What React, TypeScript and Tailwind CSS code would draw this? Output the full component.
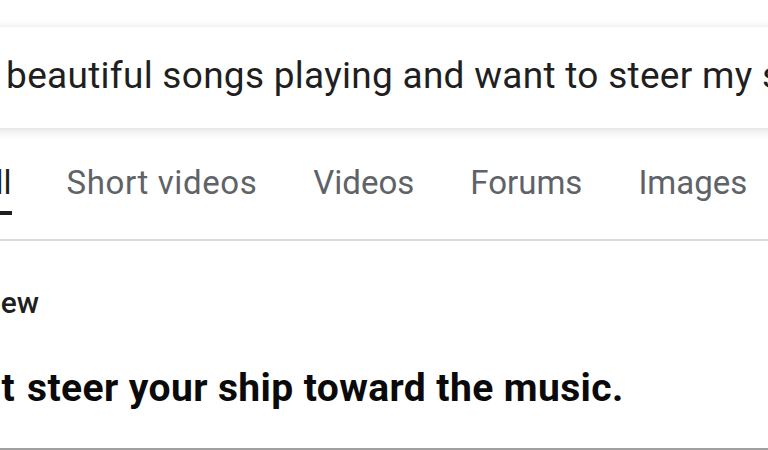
import React from "react";

export default function App() {
  const tabs = ["Short videos", "Videos", "Forums", "Images", "News"];
  return (
    <div
      className="w-[768px] h-[450px] overflow-hidden bg-white relative"
      style={{ fontFamily: "Roboto, 'Liberation Sans', Arial, sans-serif" }}
    >
      <div className="h-[27px]" />
      <div className="ml-[-40px] w-[900px] h-[101px] bg-white shadow-[0_2px_10px_rgba(0,0,0,0.14)] flex items-start pt-[30px]">
        <span className="ml-[-42px] text-[37px] tracking-[0.28px] text-[#1f1f1f] whitespace-nowrap leading-none">
          have beautiful songs playing and want to steer my ship
        </span>
      </div>
      <div className="h-[111px] flex items-start whitespace-nowrap">
        <div className="ml-[-26px] flex flex-col items-stretch mt-[38px]">
          <span className="text-[33px] leading-none text-[#1f1f1f] h-[38px]">All</span>
          <div className="h-[4px] bg-[#1f1f1f] mt-[7px]" />
        </div>
        <div className="flex gap-[56px] ml-[55px] mt-[38px]">
          {tabs.map((t, i) => (
            <span
              key={t}
              className={
                i === 0
                  ? "text-[33px] leading-none text-[#5f6368] h-[38px] tracking-[0.6px]"
                  : "text-[33px] leading-none text-[#5f6368] h-[38px]"
              }
            >
              {t}
            </span>
          ))}
        </div>
      </div>
      <div className="h-[2px] bg-[#dadce0]" />
      <div className="h-[207px] flex flex-col whitespace-nowrap">
        <div className="ml-[-120px] mt-[47px] text-[30px] leading-none font-medium text-[#1f1f1f]">
          AI Overview
        </div>
        <div className="mt-[51px] flex text-[39px] tracking-[0.4px] leading-none font-bold text-[#0a0a0a]">
          <div className="w-[15px] shrink-0 flex justify-end">
            <span className="shrink-0">Just</span>
          </div>
          <span className="ml-[12px]">steer your ship toward the music.</span>
        </div>
      </div>
      <div className="h-[2px] bg-[#a0a0a0]" />
    </div>
  );
}
